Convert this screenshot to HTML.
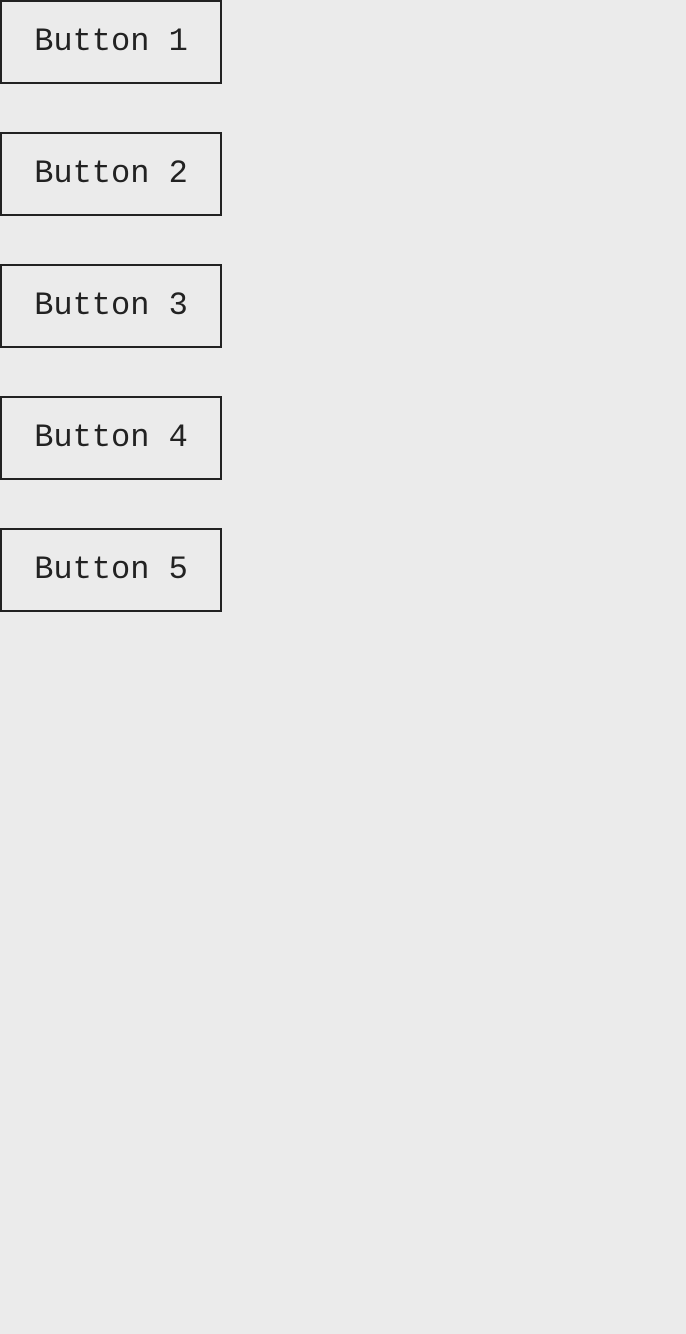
<!DOCTYPE html>
<html>
<head>
<meta charset="utf-8">
<style>
  html, body { margin:0; padding:0; }
  body { width:686px; height:1334px; background:#ebebeb; position:relative; overflow:hidden; }
  .b {
    position:absolute; left:0; width:222px; height:84px; box-sizing:border-box;
    border:2px solid #222; background:#ebebeb; color:#222;
    font-family:"Liberation Mono", monospace; font-size:32px;
    display:flex; align-items:center; justify-content:center; padding-bottom:2px;
  }
</style>
</head>
<body>
  <div class="b" style="top:0">Button 1</div>
  <div class="b" style="top:132px">Button 2</div>
  <div class="b" style="top:264px">Button 3</div>
  <div class="b" style="top:396px">Button 4</div>
  <div class="b" style="top:528px">Button 5</div>
</body>
</html>
